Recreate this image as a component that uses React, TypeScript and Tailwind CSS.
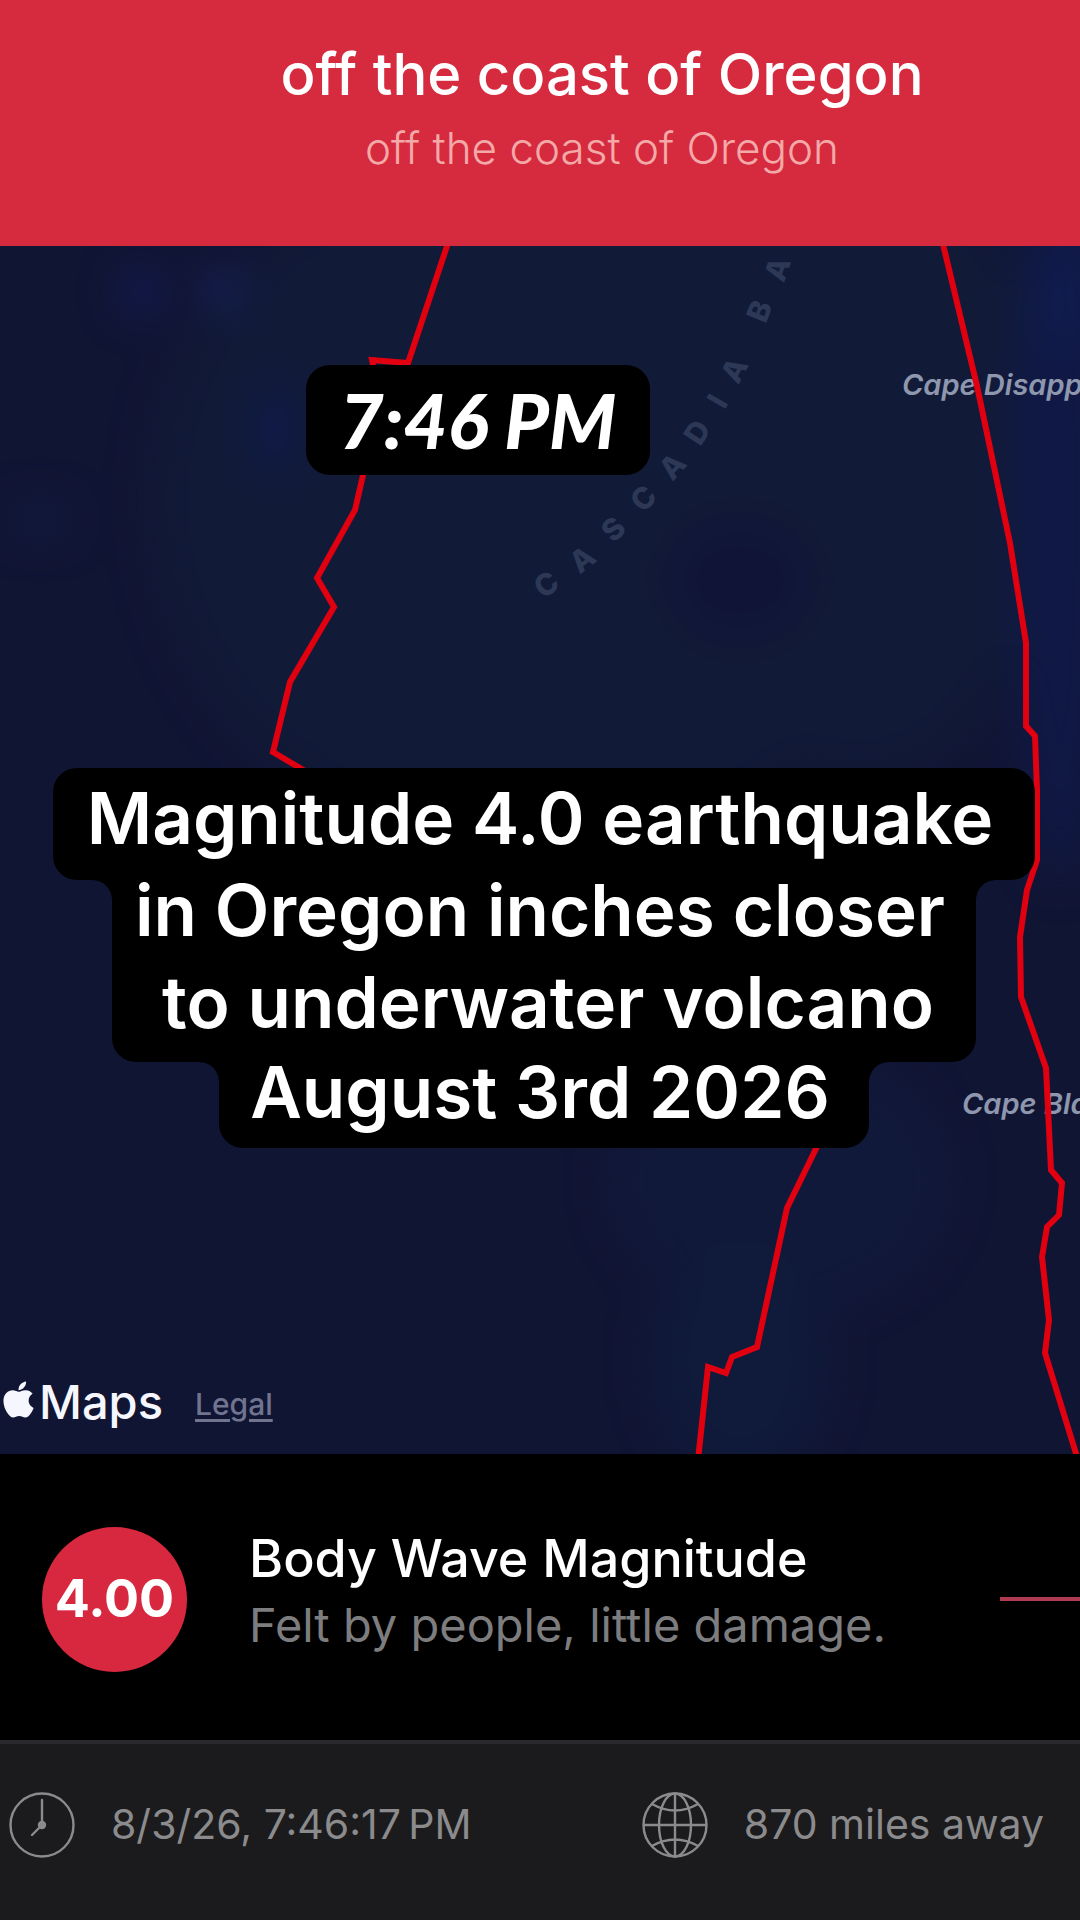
import { FaApple } from "react-icons/fa";

const PLATE_LINES = [
  "449,240 408,363 372,360 384,420 363,475 355,510 317,578 334,607 290,682 273,752 310,774",
  "942,240 977,386 1010,543 1026,643 1026,726 1035,736 1037,790 1037,860 1027,890 1020,937 1021,997 1046,1068 1051,1170 1062,1183 1059,1215 1047,1227 1042,1257 1049,1320 1045,1353 1078,1460",
  "830,1120 787,1208 757,1347 732,1357 726,1373 708,1367 698,1460",
];

const BASIN_LETTERS = [
  { char: "C", x: 546, y: 584, turn: -35 },
  { char: "A", x: 582, y: 559, turn: -38 },
  { char: "S", x: 613, y: 529, turn: -44 },
  { char: "C", x: 643, y: 498, turn: -46 },
  { char: "A", x: 672, y: 466, turn: -48 },
  { char: "D", x: 697, y: 432, turn: -56 },
  { char: "I", x: 717, y: 401, turn: -60 },
  { char: "A", x: 734, y: 370, turn: -62 },
  { char: "B", x: 759, y: 311, turn: -68 },
  { char: "A", x: 777, y: 269, turn: -71 },
];

const DEPTHS = [
  { x: 540, y: 500, rx: 390, ry: 360, fill: "#111a37" },
  { x: 860, y: 460, rx: 200, ry: 320, fill: "#111a37" },
  { x: 740, y: 580, rx: 70, ry: 60, fill: "#101538" },
  { x: 780, y: 1180, rx: 170, ry: 130, fill: "#11193a" },
  { x: 740, y: 1360, rx: 90, ry: 120, fill: "#101a3a" },
  { x: 1060, y: 500, rx: 50, ry: 380, fill: "#101945" },
  { x: 275, y: 430, rx: 16, ry: 44, fill: "#0f1a50" },
  { x: 142, y: 292, rx: 20, ry: 20, fill: "#121b58" },
  { x: 222, y: 290, rx: 18, ry: 16, fill: "#1a2468" },
  { x: 1070, y: 300, rx: 24, ry: 50, fill: "#111d52" },
  { x: 40, y: 520, rx: 30, ry: 16, fill: "#101a3e" },
];

function MapCanvas() {
  return (
    <svg
      className="absolute inset-0 h-full w-full"
      viewBox="0 246 1080 1208"
      preserveAspectRatio="xMidYMid slice"
      role="img"
      aria-label="Map of the Cascadia Basin"
    >
      <defs>
        <filter id="soft" x="-50%" y="-50%" width="200%" height="200%" colorInterpolationFilters="sRGB">
          <feGaussianBlur stdDeviation="20" />
        </filter>
      </defs>
      <rect x="0" y="246" width="1080" height="1208" fill="#111534" />
      <g filter="url(#soft)">
        {DEPTHS.map((d) => (
          <ellipse key={`${d.x}-${d.y}`} cx={d.x} cy={d.y} rx={d.rx} ry={d.ry} fill={d.fill} />
        ))}
      </g>
      <g className="font-['Inter',sans-serif] text-[30px] font-extrabold" fill="#2c3855" textAnchor="middle">
        {BASIN_LETTERS.map((l) => (
          <text key={`${l.x}`} transform={`translate(${l.x} ${l.y}) rotate(${l.turn})`} y="11">
            {l.char}
          </text>
        ))}
      </g>
      <g className="font-['Inter',sans-serif] text-[29px] font-semibold italic" fill="#8e97ad">
        <text x="902" y="395">Cape Disapp</text>
        <text x="962" y="1114">Cape Bla</text>
      </g>
      <g fill="none" stroke="#e00010" strokeWidth="6" strokeLinejoin="miter">
        {PLATE_LINES.map((points) => (
          <polyline key={points} points={points} />
        ))}
      </g>
    </svg>
  );
}

function InnerCorner({ side }: { side: "left" | "right" }) {
  return (
    <svg
      viewBox="0 0 20 20"
      aria-hidden="true"
      className={side === "left" ? "absolute top-0 right-full size-5" : "absolute top-0 left-full size-5"}
    >
      <path d={side === "left" ? "M0 0H20V20A20 20 0 0 0 0 0Z" : "M20 0H0V20A20 20 0 0 1 20 0Z"} fill="#000" />
    </svg>
  );
}

function Caption() {
  return (
    <p className="flex flex-col items-center pl-2 text-[71px] leading-[92px] font-semibold whitespace-nowrap text-white">
      <span className="flex h-28 w-[982px] justify-center rounded-3xl bg-black pt-1 pr-2">Magnitude 4.0 earthquake</span>
      <span className="relative flex h-[182px] w-[864px] flex-col items-center rounded-b-3xl bg-black pr-2">
        <InnerCorner side="left" />
        <InnerCorner side="right" />
        <span className="-mt-4">in Oregon inches closer</span>
        <span className="pl-4">to underwater volcano</span>
      </span>
      <span className="relative flex h-[86px] w-[650px] justify-center rounded-b-3xl bg-black pr-2">
        <InnerCorner side="left" />
        <InnerCorner side="right" />
        <span className="-mt-4">August 3rd 2026</span>
      </span>
    </p>
  );
}

function ClockIcon() {
  return (
    <svg viewBox="0 0 66 66" className="size-[66px] shrink-0" fill="none" stroke="currentColor" strokeWidth="2.4" strokeLinecap="round" aria-hidden="true">
      <circle cx="33" cy="33" r="31.5" />
      <path d="M33 33V8M33 33L23 43" />
      <circle cx="33" cy="33" r="3" fill="currentColor" />
    </svg>
  );
}

function GlobeIcon() {
  return (
    <svg viewBox="0 0 66 66" className="size-[66px] shrink-0" fill="none" stroke="currentColor" strokeWidth="2.4" aria-hidden="true">
      <circle cx="33" cy="33" r="31.5" />
      <ellipse cx="33" cy="33" rx="16" ry="31.5" />
      <path d="M33 1.5V64.5M1.5 33H64.5M10 12Q33 25 56 12M10 54Q33 41 56 54" />
    </svg>
  );
}

export default function App() {
  return (
    <main className="flex min-h-screen flex-col overflow-hidden bg-black font-['Inter',sans-serif]">
      <header className="flex h-[246px] flex-col items-center bg-[#d62a3f] pt-9 pl-[124px] whitespace-nowrap">
        <h1 className="text-[58px] leading-[76px] font-medium text-white">off the coast of Oregon</h1>
        <p className="text-[44px] leading-[72px] font-light text-[#f3a9a8]">off the coast of Oregon</p>
      </header>

      <section className="relative flex min-h-[1208px] flex-1 flex-col overflow-hidden">
        <MapCanvas />
        <div className="relative flex flex-1 flex-col items-center">
          <time className="mt-[119px] mr-[124px] flex h-[110px] w-[344px] items-center justify-center rounded-3xl bg-black font-['Lato',sans-serif] text-[76px] leading-none font-black text-white italic">
            7:46 PM
          </time>
          <div className="mt-[293px]">
            <Caption />
          </div>
        </div>
        <footer className="relative flex items-center gap-8 pb-5">
          <span className="flex items-center text-[47px] leading-[64px] font-medium text-[#f6f6ff]">
            <FaApple className="-mt-1.5 -ml-0.5 size-[41px]" aria-hidden="true" />
            Maps
          </span>
          <a href="#legal" className="pt-1 text-[30px] leading-9 font-medium text-[#70748f] underline underline-offset-4">
            Legal
          </a>
        </footer>
      </section>

      <section className="flex h-[286px] items-center gap-[62px] bg-black pt-1 pl-[42px]">
        <span className="flex size-[145px] shrink-0 items-center justify-center rounded-full bg-[#d8283f] text-[52px] font-bold text-white">
          4.00
        </span>
        <div className="flex-1 pb-4 whitespace-nowrap">
          <h2 className="text-[52px] leading-[68px] font-medium text-white">Body Wave Magnitude</h2>
          <p className="text-[47px] leading-[64px] text-[#7d7d7f]">Felt by people, little damage.</p>
        </div>
        <span className="h-1 w-20 shrink-0 bg-[#b03a52]" />
      </section>

      <section className="flex h-[180px] items-center border-t-4 border-[#2a2a2c] bg-[#1b1b1d] text-[41px] whitespace-nowrap text-[#8b8b8d]">
        <p className="flex flex-1 items-center gap-9 pb-3.5 pl-[9px]">
          <ClockIcon />
          8/3/26, 7:46:17&#8239;PM
        </p>
        <p className="flex items-center gap-9 pr-9 pb-3.5">
          <GlobeIcon />
          870 miles away
        </p>
      </section>
    </main>
  );
}
